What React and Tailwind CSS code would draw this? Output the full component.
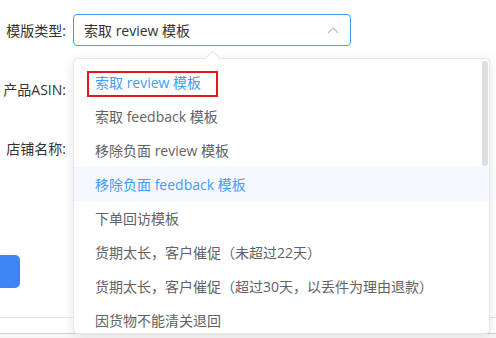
import { useState } from 'react';

const OPTIONS = [
  '索取 review 模板',
  '索取 feedback 模板',
  '移除负面 review 模板',
  '移除负面 feedback 模板',
  '下单回访模板',
  '货期太长，客户催促（未超过22天）',
  '货期太长，客户催促（超过30天，以丢件为理由退款）',
  '因货物不能清关退回',
];

function FormRow({ label, children, className = '' }) {
  return (
    <div className={`flex items-center h-[32px] ${className}`}>
      <label className="w-[66px] shrink-0 flex justify-end text-[14px] text-[#333] whitespace-nowrap">{label}</label>
      <div className="ml-[7px]">{children}</div>
    </div>
  );
}

export default function App() {
  const [selected] = useState(0);
  const [hover] = useState(3);

  return (
    <div className="relative w-[496px] h-[338px] overflow-hidden bg-white font-['Open_Sans','Noto_Sans_CJK_SC',sans-serif]">
      <div className="pt-[14px]">
        <FormRow label="模版类型:">
          <div className="w-[278px] h-[32px] border border-[#409eff] rounded-[4px] flex items-center pl-[10px] pr-[10px]">
            <span className="flex-1 text-[14px] text-[#333]">{OPTIONS[selected]}</span>
            <svg width="12" height="8" viewBox="0 0 12 8" className="mr-[1px]">
              <polyline points="1,7 6,2 11,7" fill="none" stroke="#c0c4cc" strokeWidth="1.3" />
            </svg>
          </div>
        </FormRow>
        <FormRow label="产品ASIN:" className="mt-[27px]">
          <div className="w-[278px] h-[32px]" />
        </FormRow>
        <FormRow label="店铺名称:" className="mt-[27px]">
          <div className="w-[278px] h-[32px]" />
        </FormRow>
        <div className="mt-[91px] w-[20px] h-[33px] bg-[#3d84f7] rounded-r-[5px]" />
        <div className="mt-[29px] border-t border-[#e6e6e6]" />
        <div className="mt-[15px] border-t border-[#d2d2d2] h-[5px] bg-[#f7f7f7]" />
      </div>

      {/* dropdown */}
      <div className="absolute left-[73px] top-[58px] w-[417px] h-[276px] bg-white border border-[#e4e7ed] rounded-[4px] shadow-[0_2px_12px_0_rgba(0,0,0,0.1)]">
        <div className="absolute left-[133px] -top-[6px] w-[11px] h-[11px] rotate-45 bg-white border-l border-t border-[#e4e7ed]" />
        <div className="absolute right-[1px] top-[2px] w-[6px] h-[105px] rounded-[3px] bg-[#dddee0]" />
        <ul className="pt-[6px]">
          {OPTIONS.map((opt, i) => (
            <li
              key={opt}
              className={`relative h-[34px] flex items-center pl-[21px] text-[14px] whitespace-nowrap ${
                i === selected || i === hover ? 'text-[#409eff]' : 'text-[#606266]'
              } ${i === hover ? 'bg-[#f5f8fe]' : ''}`}
            >
              {opt}
              {i === selected && (
                <span className="absolute left-[13px] top-[6px] w-[131px] h-[26px] border-2 border-[#e3161c]" />
              )}
            </li>
          ))}
        </ul>
      </div>
    </div>
  );
}
